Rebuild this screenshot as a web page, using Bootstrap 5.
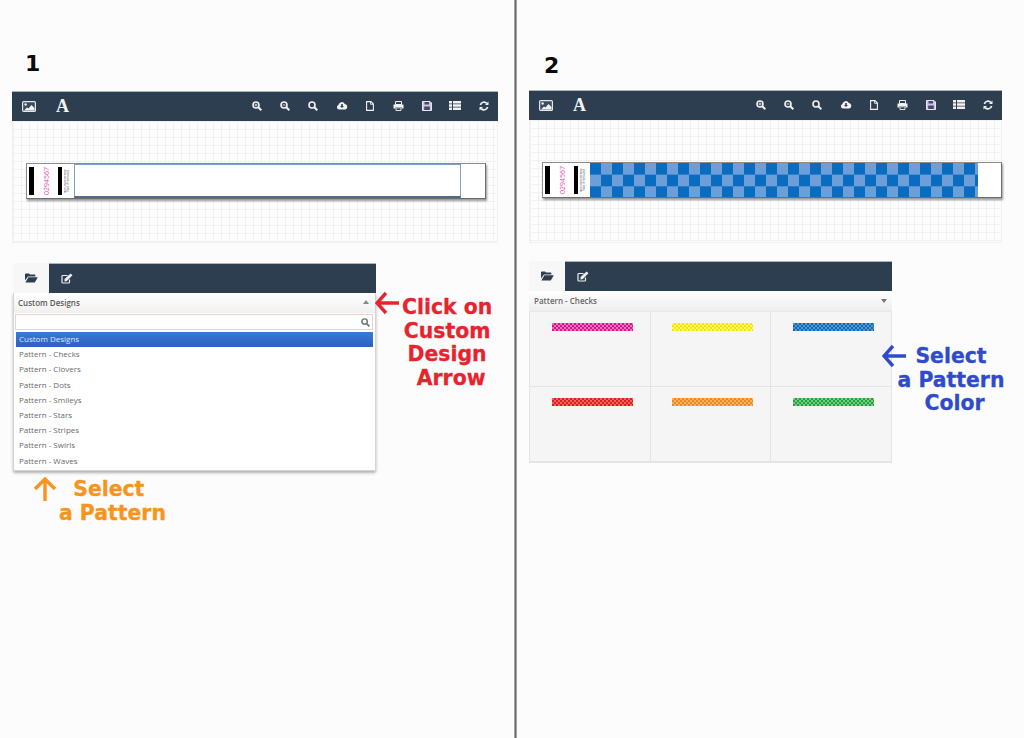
<!DOCTYPE html>
<html lang="en">
<head>
<meta charset="utf-8">
<title>Wristband designer steps</title>
<link rel="stylesheet" href="https://cdn.jsdelivr.net/npm/bootstrap@5.3.0/dist/css/bootstrap.min.css">
<style>
html,body{height:738px;overflow:hidden}
body{background:#fcfcfc;font-family:"Open Sans",sans-serif;color:#666}
.pane-a{width:514px;height:738px;padding:55px 0 0 12px;flex:none}
.pane-line{width:3px;height:738px;background:linear-gradient(90deg,#bdbdbd,#6f6f6f 50%,#bdbdbd);flex:none}
.pane-b{flex:1;height:738px;padding:57px 0 0 12px}
.step-no{font:700 22px/18px "DejaVu Sans",sans-serif;color:#0a0a0a;height:18px;margin-left:13px;margin-bottom:18px}
.pane-b .step-no{margin-bottom:15px;margin-left:15px}
.tool-strip{width:486px;height:30px;background:#2c3e50;color:#f2f2f2;padding:0 0 1px 10px;border-top:1px solid #a9b4c0}
.pane-b .tool-strip{width:473px}
.tool-a{width:31px;display:flex;justify-content:flex-start}
.tool-font{font:700 18px/1 "Liberation Serif",serif;color:#f2f2f2;padding-left:3px}
.tool-btn{width:28.4px;display:flex;justify-content:center}
.tool-strip svg{display:block}
.grid-area{width:486px;height:122px;padding-top:42px;padding-left:13px;border:1px solid #f2f2f2;border-top:0;background-color:#fdfdfd;background-image:linear-gradient(#f1f1f1 1px,transparent 1px),linear-gradient(90deg,#f1f1f1 1px,transparent 1px);background-size:8px 8px}
.pane-b .grid-area{width:473px;height:123px;padding-left:12px}
.band{width:460px;height:36px;background:#fff;border:1px solid #6d6d6d;border-left-color:#8b8b8b;border-top-color:#8b8b8b;box-shadow:1px 2px 2px rgba(0,0,0,.4)}
.band-stub{width:47px;flex:none;padding:3px 0 3px 2px;background:#fff}
.bar-mark{width:4.500px;background:#000;flex:none}
.serial{writing-mode:vertical-rl;transform:rotate(180deg);font-size:7px;line-height:7px;color:#ea4fae;width:7px;margin:0 8px 0 9px;text-align:center}
.fine{writing-mode:vertical-rl;transform:rotate(180deg);font-size:3px;line-height:3px;color:#555;width:6px;margin-left:2px;text-align:center;white-space:nowrap;overflow:hidden}
.band-print{width:387px;border:1px solid #7f9fc4;border-bottom:2px solid #55688a}
.band-check{width:388px;background-color:#6c9fd9;background-image:repeating-conic-gradient(#6c9fd9 0 25%,#0a6cbf 0 50%);background-size:22px 23.300px}
.work-row{margin-top:20px}
.pane-b .work-row{margin-top:18px}
.panel-box{width:363px;margin-left:1px;flex:none}
.pane-b .panel-box{margin-left:0}
.tab-strip{height:30px;background:#2c3e50;border-top:1px solid #a9b4c0}
.tab-on,.tab-off{width:36px;display:flex;align-items:center;justify-content:center;height:100%}
.tab-on{background:#f7f7f7;color:#2c3e50;margin-top:-1px;height:30px}
.tab-off{color:#eee}
.select-drop{border:1px solid #d4d4d4;border-top:0;background:#fff;box-shadow:0 2px 3px rgba(0,0,0,.3);height:178px;border-radius:0 0 2px 2px}
.select-head{height:20px;padding:4px 4px 0 4px;font-size:8px;line-height:12px;font-weight:600;color:#5a5a5a;background:linear-gradient(#fff,#f0f0f0)}
.arrow-up{width:0;height:0;border:3px solid transparent;border-bottom:4px solid #888;border-top:0;margin:3px 2px 0 0}
.arrow-dn{width:0;height:0;border:3px solid transparent;border-top:4px solid #777;border-bottom:0;margin:5px 5px 0 0}
.search-wrap{margin:1px 2px 2px 1px;height:16px;border:1px solid #ecd0ca;padding:0 2px;background:#fff}
.result-item.list-group-item{border:0;padding:0 3px;height:15.200px;font-size:8px;line-height:14px;color:#6a6a6a;background:transparent}
.result-item.active{background:linear-gradient(#3b78da,#2a62bd);color:#dbe6f7;margin:0 2px}
.result-list .result-item:not(.active){margin-left:2px}
.head-b{height:20px;padding:3px 0 0 5px;font-size:8px;line-height:14px;font-weight:600;color:#666;background:linear-gradient(#fff,#eee)}
.swatch-grid{background:#f5f5f5;border:1px solid #e4e4e4;border-top:1px solid #e8e8e8;border-right:0}
.swatch-cell{height:75px;border-right:1px solid #e4e4e4;border-bottom:1px solid #e4e4e4;padding:11px 0 0 5px}
.swatch{width:81px;height:8px;margin:0 auto;background-size:4px 4px}
.sw-pink{background-color:#f01f96;background-image:repeating-conic-gradient(#d41a87 0 25%,#f76cc0 0 50%)}
.sw-yellow{background-color:#fff200;background-image:repeating-conic-gradient(#f7e400 0 25%,#fff96a 0 50%)}
.sw-blue{background-color:#1b75bb;background-image:repeating-conic-gradient(#1468ab 0 25%,#4f9bd9 0 50%)}
.sw-red{background-color:#ee2a24;background-image:repeating-conic-gradient(#d81f1c 0 25%,#f2645e 0 50%)}
.sw-orange{background-color:#f7941e;background-image:repeating-conic-gradient(#ee8a1c 0 25%,#fbb15f 0 50%)}
.sw-green{background-color:#39b54a;background-image:repeating-conic-gradient(#2a9c41 0 25%,#6fd07d 0 50%)}
.note{font:700 20.400px/23.500px "DejaVu Sans",sans-serif;white-space:nowrap;-webkit-text-stroke:.3px currentColor}
.note-red{color:#e7242e;width:100px;margin-top:30px}
.note-orange{color:#f7941e}
.note-blue{color:#2f4bcb}
.tail-red{flex:none;margin:-2px 0 0 -1px}
.note-red .note-text{margin:3px 0 0 3px;text-align:center;width:95px}
.pad-arrow{padding-left:8px}
.lower-note{margin:6px 0 0 21px}
.lower-note .note-text{margin:1px 0 0 2px}
.blue-wrap{margin:83px 0 0 -10px}
.blue-wrap .note-text{margin:1px 0 0 -9px;text-align:center;width:108px}
.blue-wrap svg{flex:none}
</style>
</head>
<body>
<svg width="0" height="0" class="d-none">
<defs>
<symbol id="i-pic" viewBox="0 0 14 11"><rect x=".6" y=".6" width="12.800" height="9.800" rx="1" fill="#3a4c5f" stroke="#e4e8ec" stroke-width="1.200"/><path d="M2 9.500 5 6.500 6.500 7.500 9.500 4 12.500 7V9.500Z" fill="#f4f4f4"/><circle cx="3.600" cy="3.500" r="1.200" fill="#f4f4f4"/></symbol>
<symbol id="i-zoomin" viewBox="0 0 10 10"><circle cx="4" cy="4" r="3" fill="none" stroke="currentColor" stroke-width="1.600"/><path d="M6.300 6.300 9.300 9.300" stroke="currentColor" stroke-width="2"/><path d="M2.600 4h2.800M4 2.600v2.800" stroke="currentColor" stroke-width=".9"/></symbol>
<symbol id="i-zoomout" viewBox="0 0 10 10"><circle cx="4" cy="4" r="3" fill="none" stroke="currentColor" stroke-width="1.600"/><path d="M6.300 6.300 9.300 9.300" stroke="currentColor" stroke-width="2"/><path d="M2.600 4h2.800" stroke="currentColor" stroke-width=".9"/></symbol>
<symbol id="i-search" viewBox="0 0 10 10"><circle cx="4" cy="4" r="3" fill="none" stroke="currentColor" stroke-width="1.600"/><path d="M6.300 6.300 9.300 9.300" stroke="currentColor" stroke-width="2"/></symbol>
<symbol id="i-cloud" viewBox="0 0 12 9"><path d="M3 8.600A2.400 2.400 0 0 1 2.400 4 3.400 3.400 0 0 1 8.800 3 2.900 2.900 0 0 1 9.400 8.600Z" fill="currentColor"/><path d="M5.200 3h1.600v2H8L6 7 4 5h1.200Z" fill="#2c3e50"/></symbol>
<symbol id="i-file" viewBox="0 0 8 10"><path d="M.6.600H5L7.400 3V9.400H.6Z" fill="none" stroke="currentColor" stroke-width="1.100"/><path d="M4.600.8V3.300H7.200" fill="none" stroke="currentColor" stroke-width=".9"/></symbol>
<symbol id="i-print" viewBox="0 0 11 10"><path d="M2.500.5H8.500V3.500H2.500Z" fill="none" stroke="currentColor"/><path d="M.5 3.500H10.500V7.500H8.500V6H2.500V7.500H.5Z" fill="currentColor"/><path d="M3 6.800H8V9.500H3Z" fill="none" stroke="currentColor" stroke-width=".9"/></symbol>
<symbol id="i-save" viewBox="0 0 10 10"><path d="M.5.500H8L9.500 2V9.500H.5Z" fill="#c9c5e0" stroke="#e8e6f2"/><path d="M2.500 1H7V3.600H2.500ZM2.200 5.600H7.800V9H2.200Z" fill="#4a4570"/></symbol>
<symbol id="i-list" viewBox="0 0 12 9"><path d="M0 0H3V2.500H0ZM4 0H12V2.500H4ZM0 3.250H3V5.750H0ZM4 3.250H12V5.750H4ZM0 6.500H3V9H0ZM4 6.500H12V9H4Z" fill="currentColor"/></symbol>
<symbol id="i-sync" viewBox="0 0 10 10"><path d="M1.400 4A3.700 3.700 0 0 1 7.800 2.400" fill="none" stroke="currentColor" stroke-width="1.700"/><path d="M9.500.4V4H6Z" fill="currentColor"/><path d="M8.600 6A3.700 3.700 0 0 1 2.200 7.600" fill="none" stroke="currentColor" stroke-width="1.700"/><path d="M.5 9.600V6H4Z" fill="currentColor"/></symbol>
<symbol id="i-open" viewBox="0 0 13 10"><path d="M0 1.200Q0 .4.8.4H4L5 1.600H9.600Q10.400 1.600 10.400 2.400V3.400H3L0 7.600Z" fill="currentColor"/><path d="M3.400 4.200H12.800L9.800 9.600H.4Z" fill="currentColor"/></symbol>
<symbol id="i-edit" viewBox="0 0 12 11"><path d="M8.500 6.500V9.200Q8.500 10 7.700 10H1.800Q1 10 1 9.200V3.300Q1 2.500 1.800 2.500H6.500" fill="none" stroke="currentColor" stroke-width="1.200"/><path d="M3.500 6 9.600.5 11.500 2.300 5.600 8.200 3.500 8.500Z" fill="currentColor"/></symbol>
</defs>
</svg>

<main class="d-flex">
  <section class="pane-a">
    <div class="step-no">1</div>
    <div class="tool-strip d-flex align-items-center">
      <div class="tool-a"><svg width="14" height="11"><use href="#i-pic"/></svg></div>
      <div class="tool-font">A</div>
      <div class="ms-auto d-flex">
        <span class="tool-btn"><svg width="10" height="10"><use href="#i-zoomin"/></svg></span>
        <span class="tool-btn"><svg width="10" height="10"><use href="#i-zoomout"/></svg></span>
        <span class="tool-btn"><svg width="10" height="10"><use href="#i-search"/></svg></span>
        <span class="tool-btn"><svg width="12" height="9"><use href="#i-cloud"/></svg></span>
        <span class="tool-btn"><svg width="8" height="10"><use href="#i-file"/></svg></span>
        <span class="tool-btn"><svg width="11" height="10"><use href="#i-print"/></svg></span>
        <span class="tool-btn"><svg width="10" height="10"><use href="#i-save"/></svg></span>
        <span class="tool-btn"><svg width="12" height="9"><use href="#i-list"/></svg></span>
        <span class="tool-btn"><svg width="10" height="10"><use href="#i-sync"/></svg></span>
      </div>
    </div>
    <div class="grid-area">
      <div class="band d-flex">
        <div class="band-stub d-flex">
          <div class="bar-mark"></div><div class="serial">0294567</div><div class="bar-mark"></div><div class="fine">Non transferable<br>Void if removed</div>
        </div>
        <div class="band-print"></div>
      </div>
    </div>
    <div class="work-row d-flex">
      <div class="panel-box">
        <div class="tab-strip d-flex">
          <div class="tab-on"><svg width="13" height="10"><use href="#i-open"/></svg></div>
          <div class="tab-off"><svg width="12" height="11"><use href="#i-edit"/></svg></div>
        </div>
        <div class="select-drop">
          <div class="select-head d-flex justify-content-between"><span>Custom Designs</span><span class="arrow-up"></span></div>
          <div class="search-wrap d-flex align-items-center justify-content-end text-secondary"><svg width="9" height="9"><use href="#i-search"/></svg></div>
          <div class="list-group list-group-flush result-list">
            <div class="list-group-item result-item active">Custom Designs</div>
            <div class="list-group-item result-item">Pattern - Checks</div>
            <div class="list-group-item result-item">Pattern - Clovers</div>
            <div class="list-group-item result-item">Pattern - Dots</div>
            <div class="list-group-item result-item">Pattern - Smileys</div>
            <div class="list-group-item result-item">Pattern - Stars</div>
            <div class="list-group-item result-item">Pattern - Stripes</div>
            <div class="list-group-item result-item">Pattern - Swirls</div>
            <div class="list-group-item result-item">Pattern - Waves</div>
          </div>
        </div>
      </div>
      <div class="note note-red d-flex align-items-start">
        <svg class="tail-red" width="24" height="24" viewBox="0 0 24 24"><path d="M11 2 2 12 11 22M3 12H24" fill="none" stroke="#e7242e" stroke-width="3.400"/></svg>
        <div class="note-text">Click on<br>Custom<br>Design<br><span class="pad-arrow">Arrow</span></div>
      </div>
    </div>
    <div class="note note-orange lower-note d-flex align-items-start">
      <svg width="24" height="24" viewBox="0 0 24 24" class="flex-shrink-0"><path d="M2 12 12 2 22 12M12 3V24" fill="none" stroke="#f7941e" stroke-width="3.400"/></svg>
      <div class="note-text">&nbsp;&nbsp;Select<br>a Pattern</div>
    </div>
  </section>
  <div class="pane-line"></div>
  <section class="pane-b">
    <div class="step-no">2</div>
    <div class="tool-strip d-flex align-items-center">
      <div class="tool-a"><svg width="14" height="11"><use href="#i-pic"/></svg></div>
      <div class="tool-font">A</div>
      <div class="ms-auto d-flex">
        <span class="tool-btn"><svg width="10" height="10"><use href="#i-zoomin"/></svg></span>
        <span class="tool-btn"><svg width="10" height="10"><use href="#i-zoomout"/></svg></span>
        <span class="tool-btn"><svg width="10" height="10"><use href="#i-search"/></svg></span>
        <span class="tool-btn"><svg width="12" height="9"><use href="#i-cloud"/></svg></span>
        <span class="tool-btn"><svg width="8" height="10"><use href="#i-file"/></svg></span>
        <span class="tool-btn"><svg width="11" height="10"><use href="#i-print"/></svg></span>
        <span class="tool-btn"><svg width="10" height="10"><use href="#i-save"/></svg></span>
        <span class="tool-btn"><svg width="12" height="9"><use href="#i-list"/></svg></span>
        <span class="tool-btn"><svg width="10" height="10"><use href="#i-sync"/></svg></span>
      </div>
    </div>
    <div class="grid-area">
      <div class="band d-flex">
        <div class="band-stub d-flex">
          <div class="bar-mark"></div><div class="serial">0294567</div><div class="bar-mark"></div><div class="fine">Non transferable<br>Void if removed</div>
        </div>
        <div class="band-check"></div>
      </div>
    </div>
    <div class="work-row d-flex">
      <div class="panel-box">
        <div class="tab-strip d-flex">
          <div class="tab-on"><svg width="13" height="10"><use href="#i-open"/></svg></div>
          <div class="tab-off"><svg width="12" height="11"><use href="#i-edit"/></svg></div>
        </div>
        <div class="head-b d-flex justify-content-between"><span>Pattern - Checks</span><span class="arrow-dn"></span></div>
        <div class="swatch-grid">
          <div class="row g-0">
            <div class="col-4 swatch-cell"><div class="swatch sw-pink"></div></div>
            <div class="col-4 swatch-cell"><div class="swatch sw-yellow"></div></div>
            <div class="col-4 swatch-cell"><div class="swatch sw-blue"></div></div>
          </div>
          <div class="row g-0">
            <div class="col-4 swatch-cell"><div class="swatch sw-red"></div></div>
            <div class="col-4 swatch-cell"><div class="swatch sw-orange"></div></div>
            <div class="col-4 swatch-cell"><div class="swatch sw-green"></div></div>
          </div>
        </div>
      </div>
      <div class="note note-blue blue-wrap d-flex align-items-start">
        <svg width="24" height="24" viewBox="0 0 24 24"><path d="M11 2 2 12 11 22M3 12H24" fill="none" stroke="#2f4bcb" stroke-width="3.400"/></svg>
        <div class="note-text">Select<br>a Pattern<br>&nbsp;Color</div>
      </div>
    </div>
  </section>
</main>
<script src="https://cdn.jsdelivr.net/npm/bootstrap@5.3.0/dist/js/bootstrap.bundle.min.js"></script>
</body>
</html>
